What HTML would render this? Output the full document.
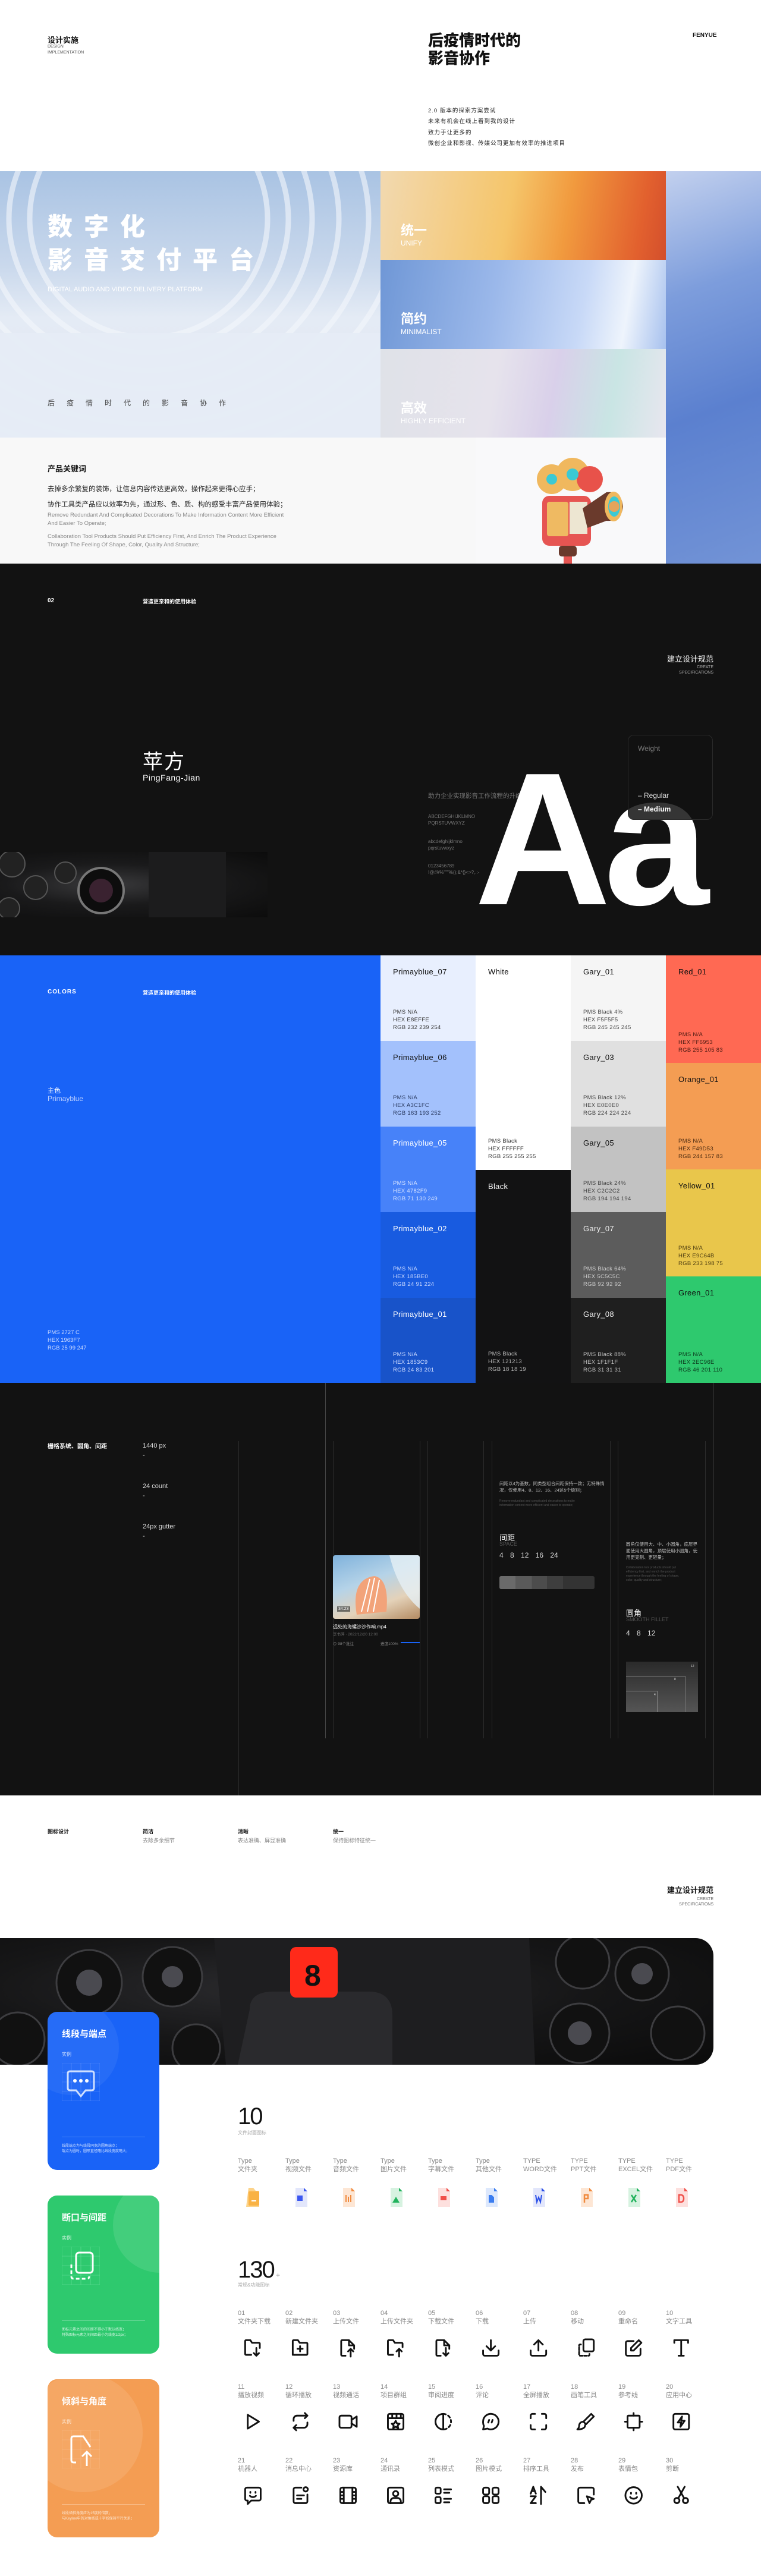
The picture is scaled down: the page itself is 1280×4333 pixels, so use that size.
<!DOCTYPE html>
<html><head><meta charset="utf-8">
<style>
*{margin:0;padding:0;box-sizing:border-box}
body{width:1280px;height:4333px;position:relative;background:#fff;font-family:"Liberation Sans","Noto Sans CJK SC",sans-serif;overflow:hidden}
.a{position:absolute;white-space:nowrap}
.sw{position:absolute;width:160px}
.sw .t{position:absolute;left:21px;top:20px;font-size:13px;letter-spacing:.3px}
.sw .i{position:absolute;left:21px;font-size:9.5px;line-height:13px;letter-spacing:.3px}
.lab{position:absolute;font-size:11px;color:#888;line-height:14px}
</style></head><body>

<div class="a" style="left:80px;top:57px;font-size:13px;font-weight:bold;color:#111">设计实施</div>
<div class="a" style="left:80px;top:74px;font-size:7px;line-height:10px;color:#555">DESIGN<br>IMPLEMENTATION</div>
<div class="a" style="left:720px;top:53px;font-size:26px;line-height:30px;font-weight:900;color:#111">后疫情时代的<br>影音协作</div>
<div class="a" style="left:1165px;top:54px;font-size:10px;font-weight:bold;color:#111">FENYUE</div>
<div class="a" style="left:720px;top:178px;font-size:9.5px;line-height:18px;color:#222;letter-spacing:1px">2.0 版本的探索方案尝试<br>未来有机会在线上看到我的设计</div>
<div class="a" style="left:720px;top:215px;font-size:9.5px;line-height:18px;color:#222;letter-spacing:1px">致力于让更多的<br>微创企业和影视、传媒公司更加有效率的推进项目</div>

<div class="a" style="left:0;top:288px;width:640px;height:448px;overflow:hidden;background:linear-gradient(180deg,#a9c3e3 0%,#c9d8ec 35%,#e4ebf5 55%,#dfe6f1 100%)">
  <svg width="640" height="448" style="position:absolute;left:0;top:0">
    <g fill="none" stroke="#f4f7fc" stroke-width="9" opacity=".6">
      <ellipse cx="250" cy="80" rx="200" ry="200"/><ellipse cx="250" cy="80" rx="235" ry="225"/><ellipse cx="250" cy="80" rx="275" ry="255"/><ellipse cx="250" cy="80" rx="320" ry="285"/><ellipse cx="250" cy="80" rx="370" ry="315"/><ellipse cx="250" cy="80" rx="420" ry="345"/><ellipse cx="250" cy="80" rx="475" ry="375"/><ellipse cx="250" cy="80" rx="530" ry="400"/>
    </g>
    <rect x="0" y="272" width="640" height="176" fill="#e6ecf5" opacity=".95"/>
  </svg>
  <div class="a" style="left:80px;top:66px;font-size:42px;line-height:56px;font-weight:900;color:#fff;letter-spacing:19px">数字化<br>影音交付平台</div>
  <div class="a" style="left:80px;top:193px;font-size:11px;color:#fff">DIGITAL AUDIO AND VIDEO DELIVERY PLATFORM</div>
  <div class="a" style="left:80px;top:381px;font-size:12px;color:#444;letter-spacing:20px">后疫情时代的影音协作</div>
</div>
<div class="a" style="left:640px;top:288px;width:480px;height:149px;background:linear-gradient(100deg,#f2d9b0 0%,#f5c56a 45%,#f19a3e 65%,#e2602e 90%,#d34f2c 100%)">
  <div class="a" style="left:34px;top:82px;font-size:22px;font-weight:bold;color:#fff">统一</div>
  <div class="a" style="left:34px;top:114px;font-size:12px;color:#fff">UNIFY</div></div>
<div class="a" style="left:640px;top:437px;width:480px;height:150px;background:linear-gradient(100deg,#6f97d6 0%,#9bb8ea 40%,#c8d9f7 70%,#eef4fc 85%,#a7c1ee 100%)">
  <div class="a" style="left:34px;top:82px;font-size:22px;font-weight:bold;color:#fff">简约</div>
  <div class="a" style="left:34px;top:114px;font-size:12px;color:#fff">MINIMALIST</div></div>
<div class="a" style="left:640px;top:587px;width:480px;height:149px;background:linear-gradient(100deg,#dfe2e8 0%,#e6e3ec 40%,#d9d0ea 60%,#c9e5e4 80%,#e8e6ef 100%)">
  <div class="a" style="left:34px;top:82px;font-size:22px;font-weight:bold;color:#fff">高效</div>
  <div class="a" style="left:34px;top:114px;font-size:12px;color:#fff">HIGHLY EFFICIENT</div></div>
<div class="a" style="left:1120px;top:288px;width:160px;height:660px;background:linear-gradient(160deg,#c2d0ee 0%,#7d9ddc 30%,#5b80cf 60%,#7293d6 100%)"></div>

<div class="a" style="left:0;top:736px;width:800px;height:212px;background:#f8f8f8"></div>
<div class="a" style="left:800px;top:736px;width:320px;height:212px;background:#f9f9fa"></div>
<div class="a" style="left:80px;top:778px;font-size:13px;font-weight:bold;color:#111">产品关键词</div>
<div class="a" style="left:80px;top:810px;font-size:11.5px;line-height:26px;color:#222">去掉多余繁复的装饰，让信息内容传达更高效，操作起来更得心应手；<br>协作工具类产品应以效率为先，通过形、色、质、构的感受丰富产品使用体验；</div>
<div class="a" style="left:80px;top:860px;font-size:9.5px;line-height:13.5px;color:#888">Remove Redundant And Complicated Decorations To Make Information Content More Efficient<br>And Easier To Operate;</div>
<div class="a" style="left:80px;top:896px;font-size:9.5px;line-height:13.5px;color:#888">Collaboration Tool Products Should Put Efficiency First, And Enrich The Product Experience<br>Through The Feeling Of Shape, Color, Quality And Structure;</div>
<svg class="a" style="left:880px;top:770px" width="180" height="178">
  <circle cx="48" cy="36" r="25" fill="#f0b85e"/><circle cx="83" cy="28" r="28" fill="#f0b85e"/><circle cx="112" cy="36" r="22" fill="#e8524a"/>
  <circle cx="48" cy="36" r="9" fill="#3cc9d4"/><circle cx="83" cy="28" r="10" fill="#3cc9d4"/>
  <rect x="32" y="64" width="82" height="84" rx="12" fill="#e65552"/>
  <rect x="40" y="74" width="36" height="58" rx="4" fill="#efba62"/><rect x="78" y="74" width="30" height="54" fill="#ede6d2"/>
  <path d="M100 85 L140 58 Q165 55 168 82 Q165 108 140 106 L108 118Z" fill="#6a3a2c"/>
  <ellipse cx="152" cy="82" rx="15" ry="25" fill="#f0b85e"/><ellipse cx="153" cy="82" rx="10" ry="17" fill="#3cc9d4"/><circle cx="153" cy="82" r="9" fill="#e5a45b"/>
  <rect x="60" y="148" width="30" height="18" rx="5" fill="#6a3a2c"/><rect x="68" y="166" width="14" height="12" fill="#e65552"/>
</svg>

<div class="a" style="left:0;top:948px;width:1280px;height:659px;background:#121212"></div>
<div class="a" style="left:80px;top:1005px;font-size:10px;font-weight:bold;color:#fff">02</div>
<div class="a" style="left:240px;top:1005px;font-size:9px;font-weight:bold;color:#fff">营造更亲和的使用体验</div>
<div class="a" style="left:1080px;top:1098px;width:120px;text-align:right;font-size:13px;color:#fff">建立设计规范</div>
<div class="a" style="left:1080px;top:1118px;width:120px;text-align:right;font-size:7px;line-height:9px;color:#aaa">CREATE<br>SPECIFICATIONS</div>
<div class="a" style="left:240px;top:1254px;font-size:34px;color:#fff;letter-spacing:2px">苹方</div>
<div class="a" style="left:240px;top:1300px;font-size:14px;color:#fff;letter-spacing:.5px">PingFang-Jian</div>
<div class="a" style="left:0;top:1433px;width:450px;height:110px;background:radial-gradient(ellipse at 40% 50%,#3a3a3c 0%,#1a1a1b 45%,#0c0c0c 100%)">
  <svg width="450" height="110"><g fill="#222" stroke="#555" stroke-width="2"><circle cx="20" cy="20" r="22"/><circle cx="60" cy="60" r="20"/><circle cx="110" cy="35" r="18"/><circle cx="15" cy="95" r="18"/></g><circle cx="170" cy="65" r="38" fill="#0d0d0d" stroke="#777" stroke-width="4"/><circle cx="170" cy="65" r="20" fill="#3a2230"/><rect x="250" y="0" width="130" height="110" fill="#1c1c1d"/></svg>
</div>
<div class="a" style="left:720px;top:1331px;font-size:10.5px;color:#777">助力企业实现影音工作流程的升级</div>
<div class="a" style="left:720px;top:1368px;font-size:8px;line-height:11px;color:#777">ABCDEFGHIJKLMNO<br>PQRSTUVWXYZ</div>
<div class="a" style="left:720px;top:1410px;font-size:8px;line-height:11px;color:#777">abcdefghijklmno<br>pqrstuvwxyz</div>
<div class="a" style="left:720px;top:1451px;font-size:8px;line-height:11px;color:#777">0123456789<br>!@#¥%"""%();&amp;*{}&lt;&gt;?,.:-</div>
<div class="a" style="left:798px;top:1222px;font-size:318px;line-height:380px;font-weight:bold;color:#fff;letter-spacing:-12px">Aa</div>
<div class="a" style="left:1056px;top:1236px;width:143px;height:143px;border-radius:10px;border:1px solid #2a2a2a;background:rgba(18,18,18,.85)">
  <div class="a" style="left:16px;top:15px;font-size:12px;color:#777">Weight</div>
  <div class="a" style="left:16px;top:94px;font-size:12px;color:#ddd">– Regular</div>
  <div class="a" style="left:16px;top:117px;font-size:12px;color:#fff;font-weight:bold">– Medium</div>
</div>

<div class="a" style="left:0;top:1607px;width:640px;height:719px;background:#1963f7"></div>
<div class="a" style="left:80px;top:1663px;font-size:10px;font-weight:bold;color:#fff;letter-spacing:1px">COLORS</div>
<div class="a" style="left:240px;top:1663px;font-size:9px;font-weight:bold;color:#fff">营造更亲和的使用体验</div>
<div class="a" style="left:80px;top:1826px;font-size:11px;color:#fff">主色</div>
<div class="a" style="left:80px;top:1841px;font-size:12px;color:#bcd0ff">Primayblue</div>
<div class="a" style="left:80px;top:2235px;font-size:9.5px;line-height:13px;color:#c9d8ff">PMS 2727 C<br>HEX 1963F7<br>RGB 25 99 247</div>

<div class="sw" style="left:640px;top:1607px;height:144px;background:#e8effe;color:#111"><div class="t">Primayblue_07</div><div class="i" style="top:89px;color:#333">PMS N/A<br>HEX E8EFFE<br>RGB 232 239 254</div></div>
<div class="sw" style="left:640px;top:1751px;height:144px;background:#a3c1fc;color:#111"><div class="t">Primayblue_06</div><div class="i" style="top:89px;color:#2a3a60">PMS N/A<br>HEX A3C1FC<br>RGB 163 193 252</div></div>
<div class="sw" style="left:640px;top:1895px;height:144px;background:#4782f9;color:#fff"><div class="t">Primayblue_05</div><div class="i" style="top:89px;color:#d8e4ff">PMS N/A<br>HEX 4782F9<br>RGB 71 130 249</div></div>
<div class="sw" style="left:640px;top:2039px;height:144px;background:#185be0;color:#fff"><div class="t">Primayblue_02</div><div class="i" style="top:89px;color:#cddbff">PMS N/A<br>HEX 185BE0<br>RGB 24 91 224</div></div>
<div class="sw" style="left:640px;top:2183px;height:143px;background:#1853c9;color:#fff"><div class="t">Primayblue_01</div><div class="i" style="top:89px;color:#cddbff">PMS N/A<br>HEX 1853C9<br>RGB 24 83 201</div></div>

<div class="sw" style="left:800px;top:1607px;height:361px;background:#fff;color:#111"><div class="t">White</div><div class="i" style="top:306px;color:#333">PMS Black<br>HEX FFFFFF<br>RGB 255 255 255</div></div>
<div class="sw" style="left:800px;top:1968px;height:358px;background:#121213;color:#fff"><div class="t">Black</div><div class="i" style="top:303px;color:#bbb">PMS Black<br>HEX 121213<br>RGB 18 18 19</div></div>

<div class="sw" style="left:960px;top:1607px;height:144px;background:#f5f5f5;color:#111"><div class="t">Gary_01</div><div class="i" style="top:89px;color:#444">PMS Black 4%<br>HEX F5F5F5<br>RGB 245 245 245</div></div>
<div class="sw" style="left:960px;top:1751px;height:144px;background:#e0e0e0;color:#111"><div class="t">Gary_03</div><div class="i" style="top:89px;color:#444">PMS Black 12%<br>HEX E0E0E0<br>RGB 224 224 224</div></div>
<div class="sw" style="left:960px;top:1895px;height:144px;background:#c2c2c2;color:#111"><div class="t">Gary_05</div><div class="i" style="top:89px;color:#444">PMS Black 24%<br>HEX C2C2C2<br>RGB 194 194 194</div></div>
<div class="sw" style="left:960px;top:2039px;height:144px;background:#5c5c5c;color:#eee"><div class="t">Gary_07</div><div class="i" style="top:89px;color:#ccc">PMS Black 64%<br>HEX 5C5C5C<br>RGB 92 92 92</div></div>
<div class="sw" style="left:960px;top:2183px;height:143px;background:#1f1f1f;color:#eee"><div class="t">Gary_08</div><div class="i" style="top:89px;color:#bbb">PMS Black 88%<br>HEX 1F1F1F<br>RGB 31 31 31</div></div>

<div class="sw" style="left:1120px;top:1607px;height:181px;background:#ff6953;color:#111"><div class="t">Red_01</div><div class="i" style="top:127px;color:#4a1a12">PMS N/A<br>HEX FF6953<br>RGB 255 105 83</div></div>
<div class="sw" style="left:1120px;top:1788px;height:179px;background:#f49d53;color:#111"><div class="t">Orange_01</div><div class="i" style="top:125px;color:#4a2a10">PMS N/A<br>HEX F49D53<br>RGB 244 157 83</div></div>
<div class="sw" style="left:1120px;top:1967px;height:180px;background:#e9c64b;color:#111"><div class="t">Yellow_01</div><div class="i" style="top:126px;color:#4a3a10">PMS N/A<br>HEX E9C64B<br>RGB 233 198 75</div></div>
<div class="sw" style="left:1120px;top:2147px;height:179px;background:#2ec96e;color:#111"><div class="t">Green_01</div><div class="i" style="top:125px;color:#0c3a1e">PMS N/A<br>HEX 2EC96E<br>RGB 46 201 110</div></div>

<div class="a" style="left:0;top:2326px;width:1280px;height:694px;background:#121212"></div>
<div class="a" style="left:400px;top:2424px;width:1px;height:596px;background:#444"></div>
<div class="a" style="left:547px;top:2326px;width:1px;height:598px;background:#444"></div>
<div class="a" style="left:1199px;top:2326px;width:1px;height:694px;background:#444"></div>
<div class="a" style="left:560px;top:2424px;width:1px;height:500px;background:#2c2c2c"></div>
<div class="a" style="left:706px;top:2424px;width:1px;height:500px;background:#2c2c2c"></div>
<div class="a" style="left:719px;top:2424px;width:1px;height:500px;background:#2c2c2c"></div>
<div class="a" style="left:813px;top:2424px;width:1px;height:500px;background:#2c2c2c"></div>
<div class="a" style="left:827px;top:2424px;width:1px;height:500px;background:#2c2c2c"></div>
<div class="a" style="left:1026px;top:2424px;width:1px;height:500px;background:#2c2c2c"></div>
<div class="a" style="left:1039px;top:2424px;width:1px;height:500px;background:#2c2c2c"></div>
<div class="a" style="left:1186px;top:2424px;width:1px;height:500px;background:#2c2c2c"></div>
<div class="a" style="left:80px;top:2424px;font-size:10px;font-weight:bold;color:#fff">栅格系统、圆角、间距</div>
<div class="a" style="left:240px;top:2424px;font-size:11px;color:#ddd;line-height:16px">1440 px<br>-</div>
<div class="a" style="left:240px;top:2492px;font-size:11px;color:#ddd;line-height:16px">24 count<br>-</div>
<div class="a" style="left:240px;top:2560px;font-size:11px;color:#ddd;line-height:16px">24px gutter<br>-</div>
<div class="a" style="left:560px;top:2616px;width:146px;height:107px;border-radius:4px;overflow:hidden;background:linear-gradient(160deg,#7fb2dc 0%,#b5d3e8 40%,#e4d2b9 70%,#b48b62 100%)">
  <svg width="146" height="107"><path d="M40 100 Q30 40 70 35 Q95 40 90 95Z" fill="#f2a37a"/><g stroke="#fff" stroke-width="2"><path d="M48 95 L62 40M58 95 L70 38M68 95 L78 42"/></g><path d="M95 0 Q110 60 146 90 L146 0Z" fill="#e6f0f5" opacity=".8"/></svg>
  <div class="a" style="left:7px;top:86px;font-size:7px;color:#fff;background:rgba(0,0,0,.5);padding:1px 2px">34:23</div>
</div>
<div class="a" style="left:560px;top:2731px;font-size:8px;color:#fff">远处的海螺沙沙作响.mp4</div>
<div class="a" style="left:560px;top:2743px;font-size:6.5px;color:#666">李书萍 · 2022/12/20 12:00</div>
<div class="a" style="left:560px;top:2759px;font-size:6.5px;color:#888">⊙ 98个批注</div>
<div class="a" style="left:640px;top:2759px;font-size:6.5px;color:#888">进度100%</div>
<div class="a" style="left:674px;top:2762px;width:32px;height:2px;background:#1963f7"></div>
<div class="a" style="left:840px;top:2490px;font-size:7.5px;line-height:11px;color:#bbb">间距以4为基数，同类型组合间距保持一致；无特殊情<br>况，仅使用4、8、12、16、24这5个级别；</div>
<div class="a" style="left:840px;top:2522px;font-size:5px;line-height:7px;color:#555">Remove redundant and complicated decorations to make<br>information content more efficient and easier to operate;</div>
<div class="a" style="left:840px;top:2576px;font-size:13px;color:#fff">间距</div>
<div class="a" style="left:840px;top:2592px;font-size:9px;color:#555">SPACE</div>
<div class="a" style="left:840px;top:2609px;font-size:12px;color:#ddd;word-spacing:8px">4 8 12 16 24</div>
<div class="a" style="left:840px;top:2651px;width:160px;height:22px;border-radius:3px;background:linear-gradient(90deg,#6a6a6a 0 17%,#5a5a5a 17% 34%,#4c4c4c 34% 50%,#3e3e3e 50% 67%,#333 67%)"></div>
<div class="a" style="left:1053px;top:2592px;font-size:7.5px;line-height:11px;color:#bbb">圆角仅使用大、中、小圆角，底层界<br>面使用大圆角，顶层使用小圆角，使<br>用更克制、更轻量；</div>
<div class="a" style="left:1053px;top:2634px;font-size:5px;line-height:7px;color:#555">Collaboration tool products should put<br>efficiency first, and enrich the product<br>experience through the feeling of shape,<br>color, quality and structure;</div>
<div class="a" style="left:1053px;top:2703px;font-size:13px;color:#fff">圆角</div>
<div class="a" style="left:1053px;top:2719px;font-size:9px;color:#555">SMOOTH FILLET</div>
<div class="a" style="left:1053px;top:2740px;font-size:12px;color:#ddd;word-spacing:8px">4 8 12</div>
<div class="a" style="left:1053px;top:2795px;width:121px;height:85px;background:linear-gradient(180deg,#2a2a2a,#555)">
  <div class="a" style="left:0;top:24px;width:100px;height:61px;border-top:1px solid #777;border-right:1px solid #777"></div>
  <div class="a" style="left:0;top:49px;width:53px;height:36px;border-top:1px solid #888;border-right:1px solid #888"></div>
  <div class="a" style="left:109px;top:5px;font-size:5px;color:#ddd">12</div><div class="a" style="left:81px;top:27px;font-size:5px;color:#ddd">8</div><div class="a" style="left:47px;top:53px;font-size:5px;color:#ddd">4</div>
</div>

<div class="a" style="left:80px;top:3074px;font-size:9px;font-weight:bold;color:#111">图标设计</div>
<div class="a" style="left:240px;top:3074px;font-size:9px;font-weight:bold;color:#111">简洁</div>
<div class="a" style="left:240px;top:3089px;font-size:9px;color:#888">去除多余细节</div>
<div class="a" style="left:400px;top:3074px;font-size:9px;font-weight:bold;color:#111">清晰</div>
<div class="a" style="left:400px;top:3089px;font-size:9px;color:#888">表达准确、屏显准确</div>
<div class="a" style="left:560px;top:3074px;font-size:9px;font-weight:bold;color:#111">统一</div>
<div class="a" style="left:560px;top:3089px;font-size:9px;color:#888">保持图标特征统一</div>
<div class="a" style="left:1080px;top:3169px;width:120px;text-align:right;font-size:13px;font-weight:bold;color:#111">建立设计规范</div>
<div class="a" style="left:1080px;top:3190px;width:120px;text-align:right;font-size:7px;line-height:9px;color:#666">CREATE<br>SPECIFICATIONS</div>

<div class="a" style="left:0;top:3260px;width:1200px;height:213px;border-radius:0 30px 30px 0;overflow:hidden;background:radial-gradient(ellipse at 40% 40%,#2b2b2e 0%,#161617 50%,#0b0b0b 100%)">
  <svg width="1200" height="213">
    <g fill="#111" stroke="#3d3d40" stroke-width="3">
      <circle cx="150" cy="75" r="55"/><circle cx="290" cy="65" r="50"/><circle cx="30" cy="170" r="45"/><circle cx="330" cy="185" r="40"/>
      <circle cx="980" cy="40" r="45"/><circle cx="1080" cy="60" r="45"/><circle cx="975" cy="160" r="50"/><circle cx="1140" cy="160" r="45"/>
    </g>
    <g fill="#4a4a50"><circle cx="150" cy="75" r="22"/><circle cx="290" cy="65" r="18"/><circle cx="975" cy="160" r="20"/><circle cx="1080" cy="60" r="18"/></g>
    <path d="M360 0 L890 0 L900 213 L380 213 Z" fill="#1e1e20"/>
    <path d="M420 120 Q420 90 460 90 L620 90 Q660 90 660 130 L660 213 L400 213Z" fill="#2a2a2d"/>
    <rect x="488" y="15" width="80" height="85" rx="10" fill="#ff2a1a"/>
    <text x="512" y="80" font-size="50" font-weight="bold" fill="#111" font-family="Liberation Sans">8</text>
  </svg>
</div>

<div class="a" style="left:80px;top:3384px;width:188px;height:266px;border-radius:16px;background:#1963f7;overflow:hidden">
  <div class="a" style="width:160px;height:160px;border-radius:50%;background:rgba(255,255,255,.06);left:-40px;top:-20px"></div>
  <div class="a" style="left:24px;top:26px;font-size:15px;font-weight:bold;color:#fff">线段与端点</div>
  <div class="a" style="left:24px;top:66px;font-size:8px;color:#cfe0ff">实例</div>
  <svg class="a" style="left:24px;top:86px" width="64" height="64"><g stroke="#5d8ffa" stroke-width=".6" fill="none"><rect x="0" y="0" width="64" height="64"/><path d="M16 0V64M32 0V64M48 0V64M0 16H64M0 32H64M0 48H64"/></g><path d="M14 14 H50 Q54 14 54 18 V42 Q54 46 50 46 H40 L32 56 L24 46 H14 Q10 46 10 42 V18 Q10 14 14 14Z" fill="none" stroke="#cfe0ff" stroke-width="3"/><g fill="#fff"><circle cx="22" cy="30" r="3"/><circle cx="32" cy="30" r="3"/><circle cx="42" cy="30" r="3"/></g></svg>
  <div class="a" style="left:24px;top:210px;width:140px;height:1px;background:#4a84f9"></div>
  <div class="a" style="left:24px;top:222px;font-size:6px;line-height:9px;color:#cfe0ff">线段端点为与线段同宽的圆角端点；<br>端点为圆时，圆形直径略比线段宽度略大；</div>
</div>
<div class="a" style="left:80px;top:3693px;width:188px;height:266px;border-radius:16px;background:#2ec96e;overflow:hidden">
  <div class="a" style="left:110px;top:-30px;width:160px;height:160px;border-radius:50%;background:rgba(255,255,255,.1)"></div>
  <div class="a" style="left:24px;top:26px;font-size:15px;font-weight:bold;color:#fff">断口与间距</div>
  <div class="a" style="left:24px;top:66px;font-size:8px;color:#d6f5e3">实例</div>
  <svg class="a" style="left:24px;top:86px" width="64" height="64"><g stroke="#6be09b" stroke-width=".6" fill="none"><rect x="0" y="0" width="64" height="64"/><path d="M16 0V64M32 0V64M48 0V64M0 16H64M0 32H64M0 48H64"/></g><rect x="24" y="10" width="28" height="34" rx="5" fill="none" stroke="#fff" stroke-width="3"/><path d="M16 30 V50 Q16 54 20 54 H42 Q46 54 46 50" fill="none" stroke="#fff" stroke-width="3" stroke-dasharray="6 4"/></svg>
  <div class="a" style="left:24px;top:210px;width:140px;height:1px;background:#6ad899"></div>
  <div class="a" style="left:24px;top:222px;font-size:6px;line-height:9px;color:#d6f5e3">图标元素之间的间距不得小于默认线宽；<br>特殊图标元素之间间距最小为线宽1/2px；</div>
</div>
<div class="a" style="left:80px;top:4002px;width:188px;height:266px;border-radius:16px;background:#f49d53;overflow:hidden">
  <div class="a" style="left:-40px;top:-10px;width:200px;height:200px;border-radius:50%;background:rgba(255,255,255,.1)"></div>
  <div class="a" style="left:24px;top:26px;font-size:15px;font-weight:bold;color:#fff">倾斜与角度</div>
  <div class="a" style="left:24px;top:66px;font-size:8px;color:#fde6d2">实例</div>
  <svg class="a" style="left:24px;top:86px" width="64" height="64"><g stroke="#f8be8c" stroke-width=".6" fill="none"><rect x="0" y="0" width="64" height="64"/><path d="M16 0V64M32 0V64M48 0V64M0 16H64M0 32H64M0 48H64"/></g><path d="M24 54 H20 Q16 54 16 50 V14 Q16 10 20 10 H36 L48 28" fill="none" stroke="#fff" stroke-width="3"/><path d="M42 60 V36 M34 44 L42 36 L50 44" fill="none" stroke="#fff" stroke-width="3"/></svg>
  <div class="a" style="left:24px;top:210px;width:140px;height:1px;background:#f8bf8e"></div>
  <div class="a" style="left:24px;top:222px;font-size:6px;line-height:9px;color:#fde6d2">线段倾斜角度应为15度的倍数；<br>与Keyline中的对角线或十字线保持平行关系；</div>
</div>

<div class="a" style="left:400px;top:3538px;font-size:40px;line-height:44px;color:#111;letter-spacing:-2px">10</div>
<div class="a" style="left:400px;top:3582px;font-size:8px;color:#aaa">文件封面图标</div>
<div class="lab" style="left:400px;top:3628px">Type<br>文件夹</div>
<div class="lab" style="left:480px;top:3628px">Type<br>视频文件</div>
<div class="lab" style="left:560px;top:3628px">Type<br>音频文件</div>
<div class="lab" style="left:640px;top:3628px">Type<br>图片文件</div>
<div class="lab" style="left:720px;top:3628px">Type<br>字幕文件</div>
<div class="lab" style="left:800px;top:3628px">Type<br>其他文件</div>
<div class="lab" style="left:880px;top:3628px">TYPE<br>WORD文件</div>
<div class="lab" style="left:960px;top:3628px">TYPE<br>PPT文件</div>
<div class="lab" style="left:1040px;top:3628px">TYPE<br>EXCEL文件</div>
<div class="lab" style="left:1120px;top:3628px">TYPE<br>PDF文件</div>
<svg class="a" style="left:400px;top:3676px" width="800" height="40">
  <g><path d="M18 4 h8 l4 5 h6 v27 h-22z" fill="#fcd38a"/><rect x="18" y="10" width="18" height="24" rx="2" fill="#f9b244"/><rect x="23" y="25" width="8" height="2" fill="#fff"/></g>
  <g transform="translate(80)"><path d="M17 4 h14 l6 6 v26 h-20z" fill="#e2e6fb"/><path d="M31 4 l6 6 h-6z" fill="#3b57f0"/><rect x="20" y="17" width="9" height="9" fill="#3b57f0"/></g>
  <g transform="translate(160)"><path d="M17 4 h14 l6 6 v26 h-20z" fill="#fde6d4"/><path d="M31 4 l6 6 h-6z" fill="#f08a3e"/><path d="M22 16v12M26 19v9M30 16v12" stroke="#f08a3e" stroke-width="2"/></g>
  <g transform="translate(240)"><path d="M17 4 h14 l6 6 v26 h-20z" fill="#d6f2e0"/><path d="M31 4 l6 6 h-6z" fill="#21b25c"/><path d="M20 29 l6-10 l6 10z" fill="#21b25c"/></g>
  <g transform="translate(320)"><path d="M17 4 h14 l6 6 v26 h-20z" fill="#fde0de"/><path d="M31 4 l6 6 h-6z" fill="#f0504a"/><rect x="21" y="18" width="10" height="7" fill="#f0504a"/></g>
  <g transform="translate(400)"><path d="M17 4 h14 l6 6 v26 h-20z" fill="#dde8fc"/><path d="M31 4 l6 6 h-6z" fill="#3b7df0"/><path d="M22 16 h5 l4 4 v9 h-9z" fill="#3b7df0"/></g>
  <g transform="translate(480)"><path d="M17 4 h14 l6 6 v26 h-20z" fill="#e2e6fb"/><path d="M31 4 l6 6 h-6z" fill="#2a4fe8"/><path d="M21 16 l2 12 l3-8 l3 8 l2-12" fill="none" stroke="#2a4fe8" stroke-width="2"/></g>
  <g transform="translate(560)"><path d="M17 4 h14 l6 6 v26 h-20z" fill="#fde6d4"/><path d="M31 4 l6 6 h-6z" fill="#f08a3e"/><path d="M23 29 V16 h6 v6 h-6" fill="none" stroke="#f08a3e" stroke-width="2.5"/></g>
  <g transform="translate(640)"><path d="M17 4 h14 l6 6 v26 h-20z" fill="#d6f2e0"/><path d="M31 4 l6 6 h-6z" fill="#21b25c"/><path d="M22 16 l8 12 M30 16 l-8 12" stroke="#21b25c" stroke-width="2.5"/></g>
  <g transform="translate(720)"><path d="M17 4 h14 l6 6 v26 h-20z" fill="#fde0de"/><path d="M31 4 l6 6 h-6z" fill="#f0504a"/><path d="M22 16 v12 h3 q5 0 5-6 q0-6-5-6z" fill="none" stroke="#f0504a" stroke-width="2.5"/></g>
</svg>

<div class="a" style="left:400px;top:3796px;font-size:40px;line-height:44px;color:#111;letter-spacing:-2px">130<span style="font-size:12px;color:#999;letter-spacing:0"> +</span></div>
<div class="a" style="left:400px;top:3838px;font-size:8px;color:#aaa">常规&amp;功能图标</div>

<div class="lab" style="left:400px;top:3884px">01<br>文件夹下载</div><div class="lab" style="left:480px;top:3884px">02<br>新建文件夹</div><div class="lab" style="left:560px;top:3884px">03<br>上传文件</div><div class="lab" style="left:640px;top:3884px">04<br>上传文件夹</div><div class="lab" style="left:720px;top:3884px">05<br>下载文件</div><div class="lab" style="left:800px;top:3884px">06<br>下载</div><div class="lab" style="left:880px;top:3884px">07<br>上传</div><div class="lab" style="left:960px;top:3884px">08<br>移动</div><div class="lab" style="left:1040px;top:3884px">09<br>重命名</div><div class="lab" style="left:1120px;top:3884px">10<br>文字工具</div>
<div class="lab" style="left:400px;top:4008px">11<br>播放视频</div><div class="lab" style="left:480px;top:4008px">12<br>循环播放</div><div class="lab" style="left:560px;top:4008px">13<br>视频通话</div><div class="lab" style="left:640px;top:4008px">14<br>项目群组</div><div class="lab" style="left:720px;top:4008px">15<br>审阅进度</div><div class="lab" style="left:800px;top:4008px">16<br>评论</div><div class="lab" style="left:880px;top:4008px">17<br>全屏播放</div><div class="lab" style="left:960px;top:4008px">18<br>画笔工具</div><div class="lab" style="left:1040px;top:4008px">19<br>参考线</div><div class="lab" style="left:1120px;top:4008px">20<br>应用中心</div>
<div class="lab" style="left:400px;top:4132px">21<br>机器人</div><div class="lab" style="left:480px;top:4132px">22<br>消息中心</div><div class="lab" style="left:560px;top:4132px">23<br>资源库</div><div class="lab" style="left:640px;top:4132px">24<br>通讯录</div><div class="lab" style="left:720px;top:4132px">25<br>列表模式</div><div class="lab" style="left:800px;top:4132px">26<br>图片模式</div><div class="lab" style="left:880px;top:4132px">27<br>排序工具</div><div class="lab" style="left:960px;top:4132px">28<br>发布</div><div class="lab" style="left:1040px;top:4132px">29<br>表情包</div><div class="lab" style="left:1120px;top:4132px">30<br>剪断</div>

<svg class="a" style="left:400px;top:3928px" width="800" height="300" fill="none" stroke="#111" stroke-width="2" stroke-linecap="round" stroke-linejoin="round">
 <g transform="translate(8,4) scale(1.45)">
  <g><path d="M10 20H4a1 1 0 0 1-1-1V4a1 1 0 0 1 1-1h5l2 3h8a1 1 0 0 1 1 1v5"/><path d="M16 12v9M13 18l3 3 3-3"/></g>
  <g transform="translate(55.2)"><path d="M3 20V4a1 1 0 0 1 1-1h5l2 3h8a1 1 0 0 1 1 1v12a1 1 0 0 1-1 1H4a1 1 0 0 1-1-1z"/><path d="M11.5 10v6M8.5 13h6"/></g>
  <g transform="translate(110.4)"><path d="M9 21H5a1 1 0 0 1-1-1V4a1 1 0 0 1 1-1h8l6 6v4"/><path d="M13 3v6h6"/><path d="M15 22v-9M12 16l3-3 3 3"/></g>
  <g transform="translate(165.6)"><path d="M9 20H4a1 1 0 0 1-1-1V4a1 1 0 0 1 1-1h5l2 3h8a1 1 0 0 1 1 1v4"/><path d="M16 22v-9M13 16l3-3 3 3"/></g>
  <g transform="translate(220.8)"><path d="M9 21H5a1 1 0 0 1-1-1V4a1 1 0 0 1 1-1h8l6 6v4"/><path d="M13 3v6h6"/><path d="M15 12v9M12 18l3 3 3-3"/></g>
  <g transform="translate(276)"><path d="M12 3v12M7 10l5 5 5-5"/><path d="M3 15v4a2 2 0 0 0 2 2h14a2 2 0 0 0 2-2v-4"/></g>
  <g transform="translate(331.2)"><path d="M12 15V3M7 8l5-5 5 5"/><path d="M3 15v4a2 2 0 0 0 2 2h14a2 2 0 0 0 2-2v-4"/></g>
  <g transform="translate(386.4)"><rect x="9" y="2" width="12" height="14" rx="2"/><path d="M6 8H5a1 1 0 0 0-1 1v11a1 1 0 0 0 1 1h10a1 1 0 0 0 1-1v-1" stroke-dasharray="3 2"/></g>
  <g transform="translate(441.6)"><path d="M12 4H5a2 2 0 0 0-2 2v13a2 2 0 0 0 2 2h13a2 2 0 0 0 2-2v-6"/><path d="M18 3l3 3-9 9H9v-3z"/></g>
  <g transform="translate(496.8)"><path d="M4 6V3h16v3M12 3v18M9 21h6"/></g>
 </g>
 <g transform="translate(8,128) scale(1.45)">
  <g><path d="M6 4l13 8-13 8z"/></g>
  <g transform="translate(55.2)"><path d="M17 2l3 3-3 3"/><path d="M4 11V9a4 4 0 0 1 4-4h12"/><path d="M7 22l-3-3 3-3"/><path d="M20 13v2a4 4 0 0 1-4 4H4"/></g>
  <g transform="translate(110.4)"><rect x="2" y="5" width="14" height="14" rx="2"/><path d="M16 10l6-4v12l-6-4"/></g>
  <g transform="translate(165.6)"><rect x="3" y="3" width="18" height="18" rx="2"/><path d="M3 8h18M8 3v5M13 3v5M18 3v5"/><path d="M12 11l1.5 3 3 .4-2.2 2 .6 3-2.9-1.5-2.9 1.5.6-3-2.2-2 3-.4z"/></g>
  <g transform="translate(220.8)"><path d="M12 3a9 9 0 0 0 0 18z"/><path d="M12 3a9 9 0 0 1 0 18" stroke-dasharray="3 3"/></g>
  <g transform="translate(276)"><path d="M3 12a9 9 0 1 1 5 8l-5 1 1-4a9 9 0 0 1-1-5z"/><path d="M10 10l-1 3M14 10l-1 3"/></g>
  <g transform="translate(331.2)"><path d="M8 3H5a2 2 0 0 0-2 2v3M16 3h3a2 2 0 0 1 2 2v3M8 21H5a2 2 0 0 1-2-2v-3M16 21h3a2 2 0 0 0 2-2v-3"/></g>
  <g transform="translate(386.4)"><path d="M18 3l3 3-9 9-3-3z"/><path d="M9 12c-3 0-5 2-5 5 0 2-1 3-2 4 4 0 9-1 9-5"/></g>
  <g transform="translate(441.6)"><rect x="5" y="5" width="14" height="14" rx="1"/><path d="M12 2v3M12 19v3M2 12h3M19 12h3"/></g>
  <g transform="translate(496.8)"><rect x="3" y="3" width="18" height="18" rx="2"/><path d="M13 6l-5 7h4l-1 5 5-7h-4z"/></g>
 </g>
 <g transform="translate(8,252) scale(1.45)">
  <g><path d="M5 3h14a2 2 0 0 1 2 2v11a2 2 0 0 1-2 2h-9l-4 4v-4H5a2 2 0 0 1-2-2V5a2 2 0 0 1 2-2z"/><path d="M9 8v1M15 8v1M8.5 12.5c2 2 5 2 7 0"/></g>
  <g transform="translate(55.2)"><path d="M13 3H6a2 2 0 0 0-2 2v14a2 2 0 0 0 2 2h12a2 2 0 0 0 2-2v-8"/><circle cx="18" cy="5" r="2.5"/><path d="M8 12h8M8 16h5"/></g>
  <g transform="translate(110.4)"><rect x="3" y="3" width="18" height="18" rx="2"/><path d="M7 3v18M17 3v18M3 8h4M3 12h4M3 16h4M17 8h4M17 12h4M17 16h4"/></g>
  <g transform="translate(165.6)"><rect x="3" y="3" width="18" height="18" rx="2"/><circle cx="12" cy="10" r="3"/><path d="M6 21v-2a4 4 0 0 1 4-4h4a4 4 0 0 1 4 4v2"/></g>
  <g transform="translate(220.8)"><rect x="3" y="3" width="6" height="7" rx="1.5"/><rect x="3" y="14" width="6" height="7" rx="1.5"/><path d="M13 5h8M13 9h6M13 16h8M13 20h6"/></g>
  <g transform="translate(276)"><rect x="3" y="3" width="7" height="8" rx="2"/><rect x="14" y="3" width="7" height="8" rx="2"/><rect x="3" y="13" width="7" height="8" rx="2"/><rect x="14" y="13" width="7" height="8" rx="2"/></g>
  <g transform="translate(331.2)"><path d="M3 10l3-8 3 8M4 7h4M3 13h6l-6 8h6"/><path d="M15 22V2l5 6"/></g>
  <g transform="translate(386.4)"><path d="M10 21H5a2 2 0 0 1-2-2V5a2 2 0 0 1 2-2h14a2 2 0 0 1 2 2v6"/><path d="M13 13l8 3-3 1-2 4z"/></g>
  <g transform="translate(441.6)"><circle cx="12" cy="12" r="9.5"/><path d="M9 9v1M15 9v1M8 14c2 2.5 6 2.5 8 0"/></g>
  <g transform="translate(496.8)"><circle cx="7" cy="18" r="3"/><circle cx="17" cy="18" r="3"/><path d="M8.5 15.5L16 2M15.5 15.5L8 2"/></g>
 </g>
</svg>

</body></html>
